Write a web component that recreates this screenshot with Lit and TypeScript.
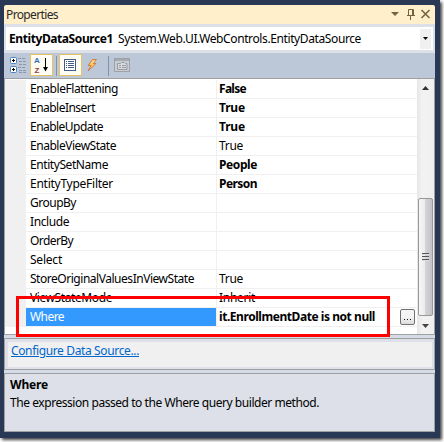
import { LitElement, html, css, svg } from "lit";
import { customElement, property } from "lit/decorators.js";

// A single line of text whose tracking is adjusted to span a given width.
@customElement("fit-text")
class FitText extends LitElement {
  @property({ type: Number }) w = 0;
  @property() text = "";
  static styles = css`
    :host { display: inline-block; white-space: pre; line-height: inherit; }
  `;
  firstUpdated() {
    const span = this.renderRoot.querySelector("span") as HTMLElement;
    const natural = span.getBoundingClientRect().width;
    if (this.w && this.text.length) {
      span.style.letterSpacing = `${(this.w - natural) / this.text.length}px`;
    }
  }
  render() {
    return html`<span>${this.text}</span>`;
  }
}

type Row = { name: string; nw: number; value?: string; vw?: number; bold?: boolean; selected?: boolean };

const rows: Row[] = [
  { name: "EnableFlattening", nw: 88, value: "False", vw: 27, bold: true },
  { name: "EnableInsert", nw: 65, value: "True", vw: 26, bold: true },
  { name: "EnableUpdate", nw: 73, value: "True", vw: 26, bold: true },
  { name: "EnableViewState", nw: 86, value: "True", vw: 24 },
  { name: "EntitySetName", nw: 78, value: "People", vw: 38, bold: true },
  { name: "EntityTypeFilter", nw: 83, value: "Person", vw: 38, bold: true },
  { name: "GroupBy", nw: 46 },
  { name: "Include", nw: 39 },
  { name: "OrderBy", nw: 43 },
  { name: "Select", nw: 32 },
  { name: "StoreOriginalValuesInViewState", nw: 164, value: "True", vw: 24 },
  { name: "ViewStateMode", nw: 82, value: "Inherit", vw: 36 },
  { name: "Where", nw: 34, value: "it.EnrollmentDate is not null", vw: 156, bold: true, selected: true },
];

@customElement("app-root")
class AppRoot extends LitElement {
  static styles = css`
    :host {
      display: block; position: relative; width: 444px; height: 442px; overflow: hidden;
      background: #fff; color: #000;
      font: 12px/18px "Noto Sans", "Open Sans", sans-serif;
    }
    * { box-sizing: border-box; }
    svg { display: block; flex: none; }
    .window {
      width: 440px; height: 438px; background: #293955; padding: 5px 5px 6px 4px;
      box-shadow: 2px 2px 3px 0 rgba(0, 0, 0, .75);
      display: flex; flex-direction: column;
    }
    .title {
      height: 19px; background: #fff0cb; color: #2a2a2a; flex: none;
      display: flex; align-items: center; justify-content: space-between; padding: 1px 4px 0 2px;
      border-radius: 2px 2px 0 0;
    }
    .combo { height: 29px; flex: none; background: #dde0e8; padding: 3px 2px; }
    .field { height: 23px; background: #fff; display: flex; align-items: center; padding: 0 2px 0 3px; }
    .field .type { margin-left: 5px; flex: 1; }
    .drop { width: 11px; height: 20px; background: #f0f0f0; display: flex; align-items: center; justify-content: center; }
    .bold { font-weight: 700; }
    .toolbar { height: 25px; flex: none; background: #bcc7d8; }
    .letter { font: 700 8px/8px "Liberation Sans", sans-serif; }
    .grid { height: 257px; flex: none; border: 1px solid #a0a0a0; background: #fff; display: flex; }
    .rows { width: 412px; padding-top: 1px; background: #fff; }
    .row { height: 19px; display: flex; }
    .gutter { width: 21px; background: #f0f0f0; }
    .name { width: 190px; padding-left: 4px; border-bottom: 1px solid #f0f0f0; }
    .value { width: 201px; padding-left: 2px; border-bottom: 1px solid #f0f0f0; border-left: 1px solid #f0f0f0; display: flex; justify-content: space-between; }
    .selected .name { background: #3399ff; color: #fff; }
    .more {
      width: 15px; height: 16px; margin: 1px 2px 0 0; border: 1px solid #707070; border-radius: 2px;
      background: linear-gradient(#f4f4f4 50%, #dcdcdc); display: flex; align-items: flex-end; justify-content: center;
      gap: 2px; padding-bottom: 4px;
    }
    .more i { width: 1px; height: 1px; background: #111; }
    .bar {
      width: 17px; background: linear-gradient(90deg, #e6e6e6, #f2f2f2 30%, #f0f0f0);
      display: flex; flex-direction: column; align-items: center;
    }
    .bar .up { height: 119px; padding-top: 7px; }
    .thumb {
      width: 15px; height: 118px; border: 1px solid #989898; border-radius: 2px;
      background: linear-gradient(90deg, #f6f6f6, #ebebeb 45%, #d4d4d6 50%, #c3c3c8);
      display: flex; flex-direction: column; align-items: center; justify-content: center; gap: 1px;
    }
    .thumb i { width: 7px; height: 2px; background: #555; border-bottom: 1px solid #ddd; }
    .bar .down { padding-top: 8px; }
    .gap { height: 3px; flex: none; background: #d5dce8; }
    .links { height: 32px; flex: none; border: 1px solid #a0a0a0; background: #dde0e8; padding: 3px 2px 2px 3px; }
    .inner { height: 25px; background: #f0f0f0; padding: 0 0 0 3px; color: #0066cc; }
    .inner fit-text { text-decoration: underline; line-height: 17px; }
    .help { height: 59px; flex: none; border: 1px solid #a0a0a0; background: #dde0e8; padding: 2px 5px; }
    .mark { position: absolute; left: 16px; top: 296px; width: 374px; height: 41px; border: 3px solid #f00; }
  `;

  tools() {
    return svg`
      <g fill="#fff" stroke="#4b83bd">
        <rect x="6.5" y="4.5" width="6" height="6" rx="1"/><rect x="6.5" y="13.5" width="6" height="6" rx="1"/>
      </g>
      <path d="M8 7.5h3M9.500 6v3M8 16.500h3M9.500 15v3" stroke="#000"/>
      <path d="M14 5.500h3M18 5.500h3M15 8.500h3M19 8.500h3M15 11.500h3M19 11.500h3M14 14.500h3M18 14.500h3M15 17.500h3M19 17.500h3M15 19.500h3M19 19.500h3" stroke="#8b96aa"/>
      <g fill="#fffcf4" stroke="#e5c365">
        <rect x="26.5" y="1.5" width="22" height="21"/><rect x="55.5" y="1.5" width="22" height="21"/>
      </g>
      <text class="letter" x="30" y="10" fill="#386cbd">A</text>
      <text class="letter" x="30.5" y="20" fill="#9c3942">Z</text>
      <path d="M41.500 5v11" stroke="#000"/><path d="M39 14h5l-2.500 4.500z" fill="#000"/>
      <path d="M52.500 3v20M104.500 3v20" stroke="#8591a5"/>
      <rect x="60.5" y="6.500" width="11" height="11" fill="#fff" stroke="#425c83"/>
      <path d="M62 8.500h1M62 10.500h1M62 12.500h1M62 14.500h1M64 8.500h6M64 10.500h6M64 12.500h6M64 14.500h6" stroke="#425c83"/>
      <path d="M88.500 6.500h4l-3.500 4h3l-8 7.500 3-5.500h-3z" fill="#f9c85a" stroke="#cf6a38" stroke-width=".8"/>
      <path d="M90.500 7.500l-3 3.500" stroke="#fff0a0"/>
      <rect x="110.500" y="5.500" width="15" height="13" fill="#c9cdd4" stroke="#9da2aa"/>
      <path d="M111 7h14" stroke="#a5a9b0" stroke-width="2"/>
      <path d="M113.500 10.500h3l1-1h3l1 1h1.500v6h-9.500z" fill="#d8dadd" stroke="#979ca4"/>
      <path d="M115 12.500h2M118 12.500h4M115 14.500h2M118 14.500h4" stroke="#979ca4"/>
    `;
  }

  render() {
    return html`
      <div class="window">
        <div class="title">
          <fit-text w="52" text="Properties"></fit-text>
          <svg width="40" height="14" fill="none" stroke="#75633d">
            <path d="M0 4h8l-4 4z" fill="#75633d" stroke="none"/>
            <path d="M17.500 7.500v-6h5v6M21.500 2v6M16 7.500h8M19.500 8v4"/>
            <path d="M30.500 2l8 8M38.500 2l-8 8" stroke-width="1.600"/>
          </svg>
        </div>
        <div class="combo">
          <div class="field">
            <fit-text class="bold" w="104" text="EntityDataSource1"></fit-text>
            <span class="type"><fit-text w="243" text="System.Web.UI.WebControls.EntityDataSource"></fit-text></span>
            <span class="drop"><svg width="5" height="3"><path d="M0 0h5L2.500 3z"/></svg></span>
          </div>
        </div>
        <div class="toolbar"><svg width="140" height="25" fill="none">${this.tools()}</svg></div>
        <div class="grid">
          <div class="rows">
            ${rows.map(
              (r) => html`<div class="row ${r.selected ? "selected" : ""}">
                <div class="gutter"></div>
                <div class="name"><fit-text .w=${r.nw} .text=${r.name}></fit-text></div>
                <div class="value">
                  ${r.value ? html`<fit-text class=${r.bold ? "bold" : ""} .w=${r.vw} .text=${r.value}></fit-text>` : ""}
                  ${r.selected ? html`<span class="more"><i></i><i></i><i></i></span>` : ""}
                </div>
              </div>`
            )}
          </div>
          <div class="bar">
            <div class="up"><svg width="7" height="4"><path d="M0 4h7L3.500 0z" fill="#333"/></svg></div>
            <div class="thumb"><i></i><i></i><i></i></div>
            <div class="down"><svg width="7" height="4"><path d="M0 0h7L3.500 4z" fill="#444"/></svg></div>
          </div>
        </div>
        <div class="gap"></div>
        <div class="links"><div class="inner"><fit-text w="128" text="Configure Data Source..."></fit-text></div></div>
        <div class="gap"></div>
        <div class="help">
          <div class="bold"><fit-text w="38" text="Where"></fit-text></div>
          <div><fit-text w="309" text="The expression passed to the Where query builder method."></fit-text></div>
        </div>
      </div>
      <div class="mark"></div>
    `;
  }
}
